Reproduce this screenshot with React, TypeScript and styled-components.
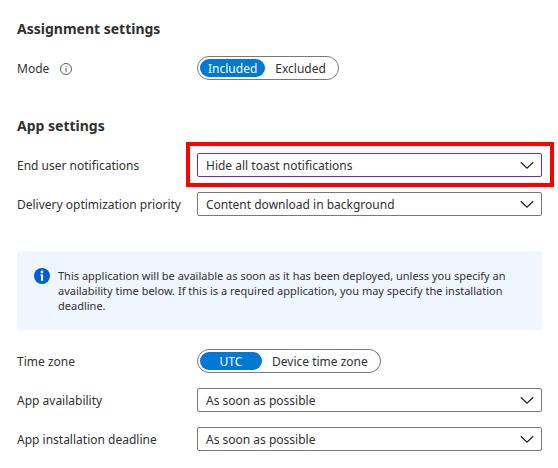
import React from "react";
import styled, { createGlobalStyle, css } from "styled-components";

const GlobalStyle = createGlobalStyle`
  *, *::before, *::after { box-sizing: border-box; }
  body {
    margin: 0;
    background: #fff;
    color: #323130;
    font-family: "Segoe UI", "Noto Sans", "Open Sans", sans-serif;
    font-size: 12px;
    line-height: 16px;
  }
`;

const Page = styled.main`
  display: flex;
  flex-direction: column;
  gap: 36px;
  padding: 19px 16px 17px 17px;
`;

const Section = styled.section`
  display: flex;
  flex-direction: column;
`;

const Heading = styled.h2`
  margin: 0 0 17px;
  font-size: 14px;
  font-weight: 700;
  line-height: 20px;
`;

const Fields = styled.div`
  display: flex;
  flex-direction: column;
  gap: 15px;
`;

const Row = styled.div`
  display: grid;
  grid-template-columns: 180px minmax(0, 1fr);
  align-items: center;
`;

const LabelCell = styled.div`
  display: flex;
  align-items: center;
  gap: 11px;
  padding-top: 2px;
  white-space: nowrap;
`;

const InfoButton = styled.button`
  display: flex;
  padding: 0;
  border: 0;
  background: none;
  color: #605e5c;
`;

const Toggle = styled.div`
  display: flex;
  justify-self: start;
  height: 24px;
  padding: 2px;
  border: 1px solid #7a7876;
  border-radius: 12px;
`;

const Option = styled.label<{ $wide?: boolean }>`
  position: relative;
  display: flex;
  align-items: center;
  justify-content: center;
  min-width: 62px;
  padding: 2px ${(p) => (p.$wide ? 10 : 8)}px 0;
  border-radius: 9px;
  white-space: nowrap;
  cursor: pointer;

  &:has(input:checked) {
    background: #0078d4;
    color: #fff;
  }
`;

const Radio = styled.input`
  position: absolute;
  inset: 0;
  margin: 0;
  opacity: 0;
  cursor: pointer;
`;

const SelectBox = styled.div<{ $highlighted?: boolean }>`
  position: relative;
  display: grid;

  ${(p) =>
    p.$highlighted &&
    css`
      &::after {
        content: "";
        position: absolute;
        inset: -11px -12px -10px -11px;
        border: 4px solid #ff0000;
        pointer-events: none;
      }
    `}
`;

const Select = styled.select<{ $edited?: boolean }>`
  appearance: none;
  width: 100%;
  height: 24px;
  margin: 0;
  padding: 2px 32px 0 8px;
  border: 1px solid ${(p) => (p.$edited ? "#8128a0" : "#7a7876")};
  border-radius: 2px;
  background: #fff;
  color: inherit;
  font: inherit;
`;

const Chevron = styled.svg`
  position: absolute;
  top: 8px;
  right: 8px;
  pointer-events: none;
`;

const Notice = styled.div`
  display: flex;
  align-items: flex-start;
  gap: 8px;
  margin: 35px 0 19px;
  padding: 17px;
  border-radius: 2px;
  background: #f0f6ff;
`;

const NoticeIcon = styled.svg`
  flex: none;
`;

const NoticeText = styled.p`
  margin: 0;
  font-size: 11px;
  line-height: 15px;
`;

type PickerProps = {
  id: string;
  label: string;
  value: string;
  edited?: boolean;
};

function PickerRow({ id, label, value, edited }: PickerProps) {
  return (
    <Row>
      <LabelCell>
        <label htmlFor={id}>{label}</label>
      </LabelCell>
      <SelectBox $highlighted={edited}>
        <Select id={id} defaultValue={value} $edited={edited}>
          <option>{value}</option>
        </Select>
        <Chevron width="14" height="9" viewBox="0 0 14 9" aria-hidden="true">
          <path d="M.8 1.2 7 7.2 13.2 1.2" fill="none" stroke="#201f1e" strokeWidth="1.2" />
        </Chevron>
      </SelectBox>
    </Row>
  );
}

type ToggleProps = {
  name: string;
  label: string;
  options: string[];
  info?: boolean;
};

function ToggleRow({ name, label, options, info }: ToggleProps) {
  return (
    <Row>
      <LabelCell>
        <span id={`${name}-label`}>{label}</span>
        {info && (
          <InfoButton type="button" aria-label={`About ${label}`}>
            <svg width="12" height="12" viewBox="0 0 12 12" aria-hidden="true">
              <circle cx="6" cy="6" r="5.5" fill="none" stroke="currentColor" />
              <path d="M6 5v4M6 3v1" stroke="currentColor" />
            </svg>
          </InfoButton>
        )}
      </LabelCell>
      <Toggle role="radiogroup" aria-labelledby={`${name}-label`}>
        {options.map((option, index) => (
          <Option key={option} $wide={index > 0}>
            <Radio type="radio" name={name} defaultChecked={index === 0} />
            {option}
          </Option>
        ))}
      </Toggle>
    </Row>
  );
}

export default function App() {
  return (
    <>
      <GlobalStyle />
      <Page>
        <Section>
          <Heading>Assignment settings</Heading>
          <ToggleRow name="mode" label="Mode" options={["Included", "Excluded"]} info />
        </Section>
        <Section>
          <Heading>App settings</Heading>
          <Fields>
            <PickerRow
              id="notifications"
              label="End user notifications"
              value="Hide all toast notifications"
              edited
            />
            <PickerRow
              id="priority"
              label="Delivery optimization priority"
              value="Content download in background"
            />
          </Fields>
          <Notice role="note">
            <NoticeIcon width="16" height="16" viewBox="0 0 16 16" aria-hidden="true">
              <circle cx="8" cy="8" r="8" fill="#015cda" />
              <circle cx="8" cy="4" r="1.4" fill="#fff" />
              <path d="M6.2 6.4h2.9v6.6H7V7.6h-.8z" fill="#fff" />
            </NoticeIcon>
            <NoticeText>
              This application will be available as soon as it has been deployed, unless you
              specify an availability time below. If this is a required application, you may
              specify the installation deadline.
            </NoticeText>
          </Notice>
          <Fields>
            <ToggleRow name="timezone" label="Time zone" options={["UTC", "Device time zone"]} />
            <PickerRow id="availability" label="App availability" value="As soon as possible" />
            <PickerRow
              id="deadline"
              label="App installation deadline"
              value="As soon as possible"
            />
          </Fields>
        </Section>
      </Page>
    </>
  );
}
